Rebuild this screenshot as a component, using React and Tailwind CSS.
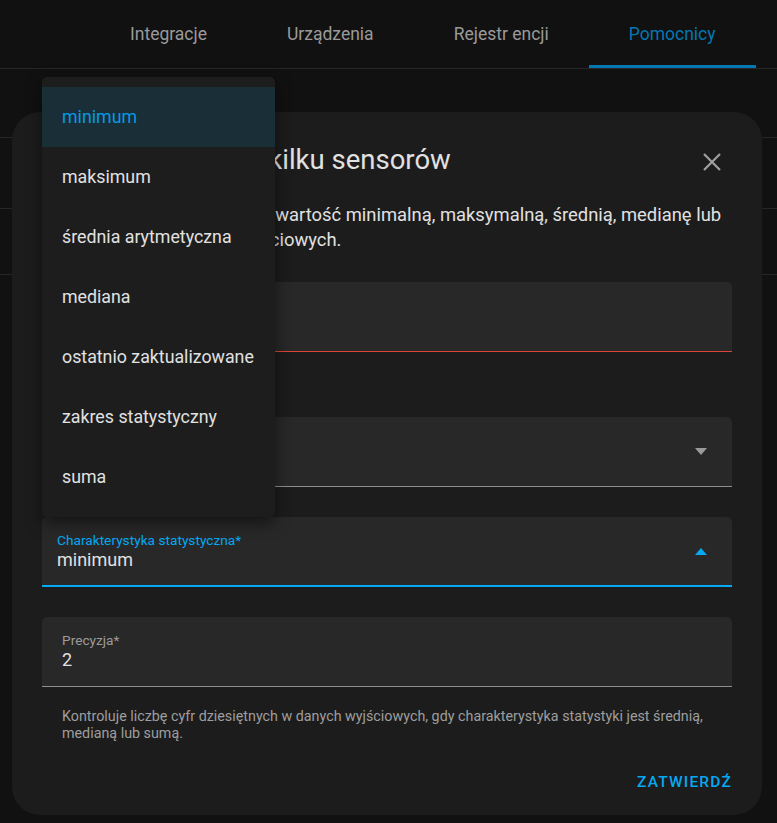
import React from 'react';

const tabs = ['Integracje', 'Urządzenia', 'Rejestr encji', 'Pomocnicy'];
const options = [
  'minimum',
  'maksimum',
  'średnia arytmetyczna',
  'mediana',
  'ostatnio zaktualizowane',
  'zakres statystyczny',
  'suma',
];

const Caret = ({ up, className }) => (
  <svg width="12" height="7" viewBox="0 0 12 7" className={className}>
    {up ? <path d="M0 7 L6 0 L12 7 Z" fill="currentColor" /> : <path d="M0 0 L12 0 L6 7 Z" fill="currentColor" />}
  </svg>
);

const Field = ({ label, value, border, labelColor = 'text-[#9b9b9b]', padX = 'px-[20px]', caret, caretUp, caretColor }) => (
  <div className={`h-[70px] bg-[#282828] rounded-t-[5px] flex items-center ${padX} pr-[25px] ${border}`}>
    <div className="flex-1 flex flex-col justify-center pt-[1px]">
      {label && <span className={`text-[13.7px] leading-[16px] ${labelColor}`}>{label}</span>}
      {value && <span className="text-[18px] leading-[24px] text-[#e1e1e1]">{value}</span>}
    </div>
    {caret && <Caret up={caretUp} className={caretColor} />}
  </div>
);

export default function App() {
  return (
    <div className="relative w-full h-[823px] bg-[#111111] overflow-hidden" style={{ fontFamily: 'Roboto, "Noto Sans", sans-serif' }}>
      {/* Header tabs */}
      <div className="h-[69px] border-b border-[#262626] flex items-stretch pl-[90px]">
        {tabs.map((t, i) => (
          <div
            key={t}
            className={`px-[40px] flex items-center text-[17.5px] ${
              i === 3 ? 'text-[#0277b4] border-b-[3px] border-[#0277b4] pt-[3px]' : 'text-[#9a9a9a]'
            }`}
          >
            {t}
          </div>
        ))}
      </div>

      {/* Background list rows */}
      <div className="h-[69px] border-b border-[#262626]" />
      <div className="h-[71px] border-b border-[#262626]" />
      <div className="h-[66px] border-b border-[#262626]" />

      {/* Dialog */}
      <div className="absolute left-[12px] top-[112px] w-[750px] h-[703px] rounded-[28px] bg-[#1c1c1c] px-[30px] pt-[30px] flex flex-col">
        <div className="flex items-center justify-between h-[36px]">
          <h2 className="text-[27.5px] text-[#e1e1e1] pl-[76px]">Połącz stan kilku sensorów</h2>
          <svg width="20" height="20" viewBox="0 0 20 20" className="mr-[10px] mt-[3px]">
            <path d="M2 2 L18 18 M18 2 L2 18" stroke="#a0a0a0" strokeWidth="2.2" />
          </svg>
        </div>
        <p className="mt-[24px] text-[18.4px] leading-[25px] text-[#e1e1e1]">
          Utwórz sensor, który oblicza wartość minimalną, maksymalną, średnią, medianę lub sumę z kilku sensorów wejściowych.
        </p>

        <div className="mt-[30px]">
          <Field border="border-b border-[#db4437]" />
        </div>
        <div className="h-[65px]" />
        <Field border="border-b border-[#8f8f8f]" caret caretColor="text-[#9a9a9a]" />
        <div className="h-[30px]" />
        <Field
          label="Charakterystyka statystyczna*"
          value="minimum"
          labelColor="text-[#03a9f4]"
          padX="pl-[15px]"
          border="border-b-2 border-[#03a9f4]"
          caret
          caretUp
          caretColor="text-[#03a9f4]"
        />
        <div className="h-[30px]" />
        <Field label="Precyzja*" value="2" border="border-b border-[#8f8f8f]" />
        <p className="mt-[21px] px-[20px] text-[14.3px] leading-[17px] text-[#9e9e9e]">
          Kontroluje liczbę cyfr dziesiętnych w danych wyjściowych, gdy charakterystyka statystyki jest średnią, medianą lub sumą.
        </p>
        <div className="flex justify-end mt-[29px]">
          <button className="text-[15.5px] font-medium tracking-[1.2px] text-[#03a9f4] uppercase">Zatwierdź</button>
        </div>
      </div>

      {/* Dropdown menu */}
      <div className="absolute left-[42px] top-[77px] w-[233px] py-[10px] bg-[#1d1d1d] rounded-[5px] shadow-[0_6px_16px_rgba(0,0,0,0.5)]">
        {options.map((o, i) => (
          <div
            key={o}
            className={`h-[60px] flex items-center px-[20px] text-[17.8px] ${
              i === 0 ? 'bg-[#1a2e37] text-[#039be5]' : 'text-[#e1e1e1]'
            }`}
          >
            {o}
          </div>
        ))}
      </div>
    </div>
  );
}
